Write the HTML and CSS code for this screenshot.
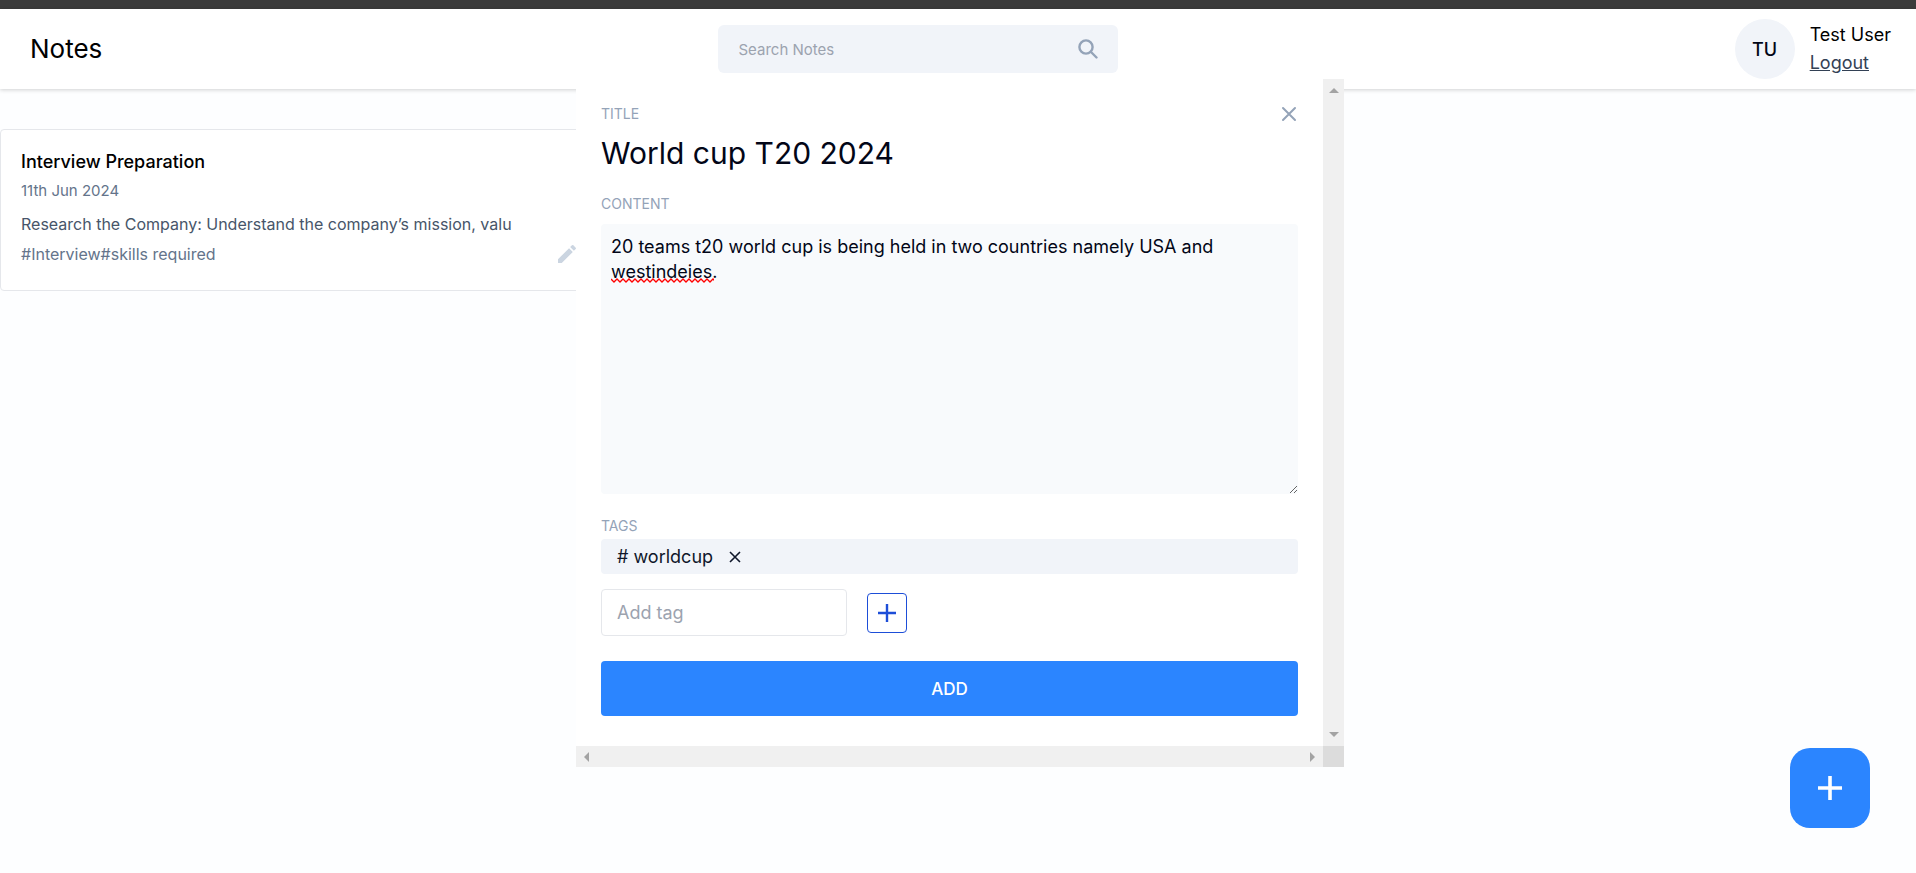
FILE: index.html
```html
<!DOCTYPE html>
<html lang="en">
<head>
<meta charset="utf-8">
<title>Notes</title>
<link rel="stylesheet" href="styles.css">
</head>
<body>
<div class="topline"></div>
<header class="navbar">
  <h1 class="brand">Notes</h1>
  <form class="search" role="search">
    <input class="search-input" type="text" placeholder="Search Notes" aria-label="Search Notes">
    <button class="icon-button search-button" type="button" aria-label="Search">
      <svg width="20" height="20" viewBox="0 0 20 20" fill="none" stroke="currentColor" stroke-width="2.4" stroke-linecap="round"><circle cx="8" cy="8" r="6.6"/><path d="M13 13l5.5 5.5"/></svg>
    </button>
  </form>
  <div class="profile">
    <div class="avatar">TU</div>
    <div class="profile-info">
      <p class="profile-name">Test User</p>
      <button class="logout" type="button">Logout</button>
    </div>
  </div>
</header>

<main class="notes">
  <article class="note-card">
    <h2 class="note-title">Interview Preparation</h2>
    <p class="note-date">11th Jun 2024</p>
    <p class="note-text">Research the Company: Understand the company’s mission, valu</p>
    <div class="note-footer">
      <p class="note-tags">#Interview#skills required</p>
      <button class="icon-button note-edit" type="button" aria-label="Edit note">
        <svg width="24" height="24" viewBox="0 0 24 24" fill="currentColor"><path d="M3 17.25V21h3.75L17.81 9.94l-3.75-3.75L3 17.25zM20.71 7.04a1 1 0 0 0 0-1.41l-2.34-2.34a1 1 0 0 0-1.41 0l-1.83 1.83 3.75 3.75 1.83-1.83z"/></svg>
      </button>
    </div>
  </article>
</main>

<button class="fab" type="button" aria-label="New note">
  <svg width="24" height="24" viewBox="0 0 24 24" stroke="currentColor" stroke-width="3.6"><path d="M12 0v24M0 12h24"/></svg>
</button>

<div class="overlay">
  <div class="modal" role="dialog" aria-label="Add note">
    <form class="editor">
      <div class="editor-head">
        <label class="label" for="title">TITLE</label>
        <button class="icon-button close" type="button" aria-label="Close">
          <svg width="18" height="16" viewBox="0 0 18 16" stroke="currentColor" stroke-width="2" stroke-linecap="round"><path d="M3 2l12 12M15 2L3 14"/></svg>
        </button>
      </div>
      <input class="title-input" id="title" type="text" value="World cup T20 2024">
      <label class="label content-label" for="content">CONTENT</label>
      <div class="content-box">
        <textarea class="content-input" id="content" rows="10" spellcheck="false">20 teams t20 world cup is being held in two countries namely USA and westindeies.</textarea>
        <svg class="squiggle" width="103" height="5" viewBox="0 0 103 5" fill="none" stroke="#f00" stroke-width="1.3"><path d="M0 1l3 3 3-3 3 3 3-3 3 3 3-3 3 3 3-3 3 3 3-3 3 3 3-3 3 3 3-3 3 3 3-3 3 3 3-3 3 3 3-3 3 3 3-3 3 3 3-3 3 3 3-3 3 3 3-3 3 3 3-3 3 3 3-3 3 3 3-3 3 3"/></svg>
      </div>
      <label class="label tags-label" for="tag">TAGS</label>
      <div class="tag-list">
        <span class="tag"># worldcup
          <button class="icon-button" type="button" aria-label="Remove worldcup">
            <svg width="12" height="12" viewBox="0 0 12 12" stroke="currentColor" stroke-width="1.6"><path d="M1 1l10 10M11 1L1 11"/></svg>
          </button>
        </span>
      </div>
      <div class="tag-row">
        <input class="tag-input" id="tag" type="text" placeholder="Add tag">
        <button class="tag-add" type="button" aria-label="Add tag">
          <svg width="18" height="18" viewBox="0 0 18 18" stroke="currentColor" stroke-width="2.4"><path d="M9 0v18M0 9h18"/></svg>
        </button>
      </div>
      <button class="submit" type="button">ADD</button>
    </form>
    <div class="bar bar-vertical">
      <svg width="10" height="5" viewBox="0 0 10 5"><path d="M0 5l5-5 5 5z"/></svg>
      <svg width="10" height="5" viewBox="0 0 10 5"><path d="M0 0l5 5 5-5z"/></svg>
    </div>
    <div class="bar bar-horizontal">
      <svg width="5" height="10" viewBox="0 0 5 10"><path d="M5 0L0 5l5 5z"/></svg>
      <svg width="5" height="10" viewBox="0 0 5 10"><path d="M0 0l5 5-5 5z"/></svg>
    </div>
    <div class="bar-corner"></div>
  </div>
</div>
</body>
</html>
```
FILE: styles.css
```css
* { box-sizing: border-box; margin: 0; }
body {
  min-height: 100vh;
  overflow: hidden;
  background: #fdfeff;
  color: #000;
  font-family: Inter, "Open Sans", sans-serif;
  font-size: 18px;
}
button, input, textarea { font: inherit; color: inherit; }
svg { display: block; }

.icon-button { display: flex; padding: 0; border: 0; background: none; }

.topline { height: 9px; background: #3b3b3b; }

.navbar {
  display: flex;
  align-items: center;
  justify-content: space-between;
  padding: 10px 25px 10px 30px;
  background: #fff;
  box-shadow: 0 1px 4px rgba(0, 0, 0, 0.18);
}
.brand { font-size: 26px; font-weight: 400; line-height: 32px; }
.search {
  display: flex;
  align-items: center;
  width: 400px;
  height: 48px;
  padding: 0 20px;
  border-radius: 6px;
  background: #f1f4f9;
}
.search-input {
  flex: 1;
  min-width: 0;
  padding: 0;
  border: 0;
  outline: 0;
  background: none;
  font-size: 15px;
}
.search-input::placeholder, .tag-input::placeholder { color: #9ca3af; opacity: 1; }
.search-button { color: #94a3b8; }
.profile { display: flex; align-items: center; gap: 15px; }
.avatar {
  display: grid;
  place-items: center;
  width: 60px;
  height: 60px;
  border-radius: 50%;
  background: #f1f4f9;
  color: #020617;
  font-weight: 500;
}
.profile-name { line-height: 28px; }
.logout {
  display: block;
  padding: 0;
  border: 0;
  background: none;
  color: #334155;
  line-height: 28px;
  text-decoration: underline;
}

.notes {
  display: grid;
  grid-template-columns: repeat(3, 1fr);
  gap: 16px;
  padding-top: 40px;
}
.note-card {
  padding: 16px 48px 16px 20px;
  border: 1px solid #e5e7eb;
  border-radius: 4px;
  background: #fff;
  font-size: 16px;
}
.note-title { margin: 2px 0; font-size: 18px; font-weight: 500; line-height: 28px; }
.note-date { color: #64748b; font-size: 15px; line-height: 26px; }
.note-text { margin-top: 8px; color: #475569; line-height: 24px; }
.note-footer { display: flex; align-items: center; justify-content: space-between; padding: 5px 0 7px; }
.note-tags { color: #64748b; line-height: 26px; }
.note-edit { color: #cbd5e1; }

.fab {
  position: fixed;
  right: 46px;
  bottom: 45px;
  display: grid;
  place-items: center;
  width: 80px;
  height: 80px;
  border: 0;
  border-radius: 20px;
  background: #2b85ff;
  color: #fff;
}

.overlay {
  position: fixed;
  inset: 0;
  display: flex;
  align-items: flex-start;
  justify-content: center;
  padding: 79px 0 0 4px;
  pointer-events: none;
}
.modal {
  display: grid;
  grid-template-columns: 1fr 21px;
  grid-template-rows: auto 21px;
  width: 768px;
  background: #fff;
  pointer-events: auto;
}
.editor { display: flex; flex-direction: column; padding: 24px 25px 30px; }
.editor-head { display: flex; align-items: center; justify-content: space-between; }
.close { color: #94a3b8; }
.label { color: #94a3b8; font-size: 14px; line-height: 22px; }
.title-input {
  width: 100%;
  height: 48px;
  margin-top: 4px;
  padding: 0;
  border: 0;
  outline: 0;
  color: #020617;
  font-size: 30px;
}
.content-label { margin-top: 16px; }
.content-box { position: relative; margin-top: 9px; }
.content-input {
  display: block;
  width: 100%;
  padding: 10px;
  border: 0;
  border-radius: 4px;
  outline: 0;
  background: #f8fafc;
  color: #020617;
  line-height: 25px;
  resize: vertical;
}
.squiggle { position: absolute; left: 10px; top: 54px; }
.tags-label { margin-top: 21px; }
.tag-list { margin-top: 2px; padding: 0 16px; border-radius: 4px; background: #f1f4f9; }
.tag { display: inline-flex; align-items: center; gap: 16px; color: #0f172a; line-height: 35px; vertical-align: top; }
.tag-row { display: flex; align-items: center; gap: 20px; margin-top: 15px; }
.tag-input {
  width: 246px;
  height: 47px;
  padding: 0 15px;
  border: 1px solid #e5e7eb;
  border-radius: 4px;
  outline: 0;
}
.tag-add {
  display: grid;
  place-items: center;
  width: 40px;
  height: 40px;
  padding: 0;
  border: 1px solid #1d4ed8;
  border-radius: 4px;
  background: #fff;
  color: #1d4ed8;
}
.submit {
  height: 55px;
  margin-top: 25px;
  border: 0;
  border-radius: 4px;
  background: #2b85ff;
  color: #fff;
  font-size: 17px;
  font-weight: 500;
}
.bar { display: flex; align-items: center; justify-content: space-between; background: #f0f0f0; fill: #a3a3a3; }
.bar-vertical { flex-direction: column; padding: 9px 0; }
.bar-horizontal { padding: 0 8px; }
.bar-corner { background: #dcdcdc; }
```
